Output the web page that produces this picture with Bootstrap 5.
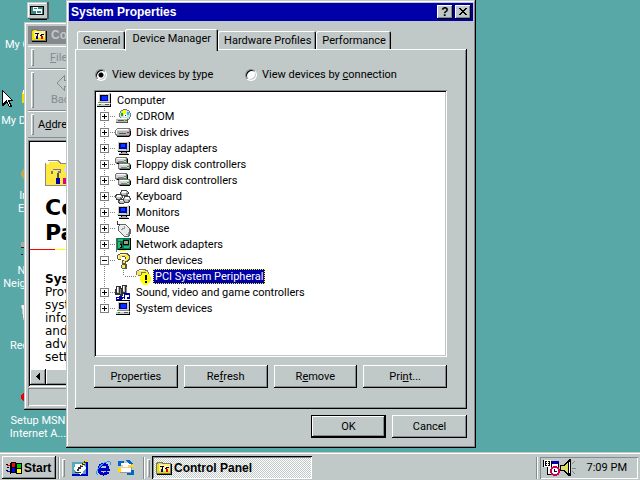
<!DOCTYPE html>
<html lang="en">
<head>
<meta charset="utf-8">
<meta name="viewport" content="width=device-width, initial-scale=1">
<title>System Properties</title>
<link href="https://cdn.jsdelivr.net/npm/bootstrap@5.3.0/dist/css/bootstrap.min.css" rel="stylesheet">
<style>
:root{--face:#c0c8c8;--shade:#868a8e;--teal:#58a8a8;--navy:#0000a8}
body{font:11px/16px Roboto,"Liberation Sans",Arial,sans-serif;color:#000;background:var(--teal)}
button{font:inherit;color:inherit}
svg{display:block;flex:none;shape-rendering:crispEdges}
u{text-underline-offset:1px}
.desktop{background:var(--teal)}
.px12{font-family:"Liberation Sans",Arial,sans-serif;font-size:12px;font-weight:700}
.frame{background:var(--face);padding:3px;box-shadow:inset -1px -1px #000,inset 1px 1px var(--face),inset -2px -2px var(--shade),inset 2px 2px #fff}
.raised{background:var(--face);border:0;border-radius:0;padding:0;box-shadow:inset -1px -1px #000,inset 1px 1px #fff,inset -2px -2px var(--shade)}
.sunken{box-shadow:inset 1px 1px var(--shade),inset -1px -1px #fff}
.field{background:#fff;padding:2px;box-shadow:inset 1px 1px var(--shade),inset -1px -1px #fff,inset 2px 2px #000,inset -2px -2px var(--face)}
.default{box-shadow:inset 0 0 0 1px #000,inset -2px -2px #000,inset 2px 2px #fff,inset -3px -3px var(--shade)}

/* desktop icons */
.shortcut{left:1px;width:74px;color:#fff;line-height:13px;text-decoration:none;text-align:center}
.shortcut svg{margin:0 auto 4px}
.spot-computer{top:2px}
.spot-computer svg{margin-bottom:17px}
.spot-documents{top:90px}
.spot-internet{top:163px}
.spot-network{top:240px}
.spot-recycle{top:305px}
.spot-msn{top:388px}

/* folder window */
.folder-win{left:24px;top:22px;width:56px;padding:4px;overflow:hidden}
.folder-title{background:var(--shade);color:var(--face);height:18px;padding-left:3px;margin-bottom:2px;white-space:nowrap}
.band{padding-left:3px;border-top:1px solid #fff;border-bottom:1px solid var(--shade);color:var(--shade)}
.menu-band{height:23px}
.tool-band{height:42px}
.address-band{height:27px;margin-bottom:2px;color:#000}
.grip{flex:none;width:3px;align-self:stretch;margin:2px 0;box-shadow:inset 1px 1px #fff,inset -1px -1px var(--shade)}
.web-pane{font:12px/13px "DejaVu Sans",Verdana,sans-serif;padding:17px 0 0 15px;height:227px;overflow:hidden}
.web-pane h1{font:700 22px/25px "DejaVu Sans",Verdana,sans-serif;margin:8px 0 4px}
.web-rule{height:1px;margin:0 0 23px -15px;background:linear-gradient(90deg,#f00 25px,#ff0 25px)}
.web-pane p{width:76px}
.scroll-btn{width:16px;height:16px}
.status{height:18px;margin-top:1px}

/* dialog */
.dialog{left:66px;top:0;width:410px}
.dialog-title{background:var(--navy);color:#fff;height:18px;padding:0 2px}
.title-btn{width:16px;height:14px;color:#000}
.dialog-body{padding:8px 6px 7px}
.tab-row{padding-left:2px;height:20px}
.sheet-tab{height:18px;background:var(--face);border:0;padding:2px 5px 0 6px;border-radius:2px 2px 0 0;box-shadow:inset 1px 1px #fff,inset -1px 0 #000,inset -2px 0 var(--shade)}
.sheet-tab.active{height:22px;margin-bottom:-2px;padding:0 7px 2px;position:relative;z-index:1}
.sheet{padding:17px 20px 21px 19px;box-shadow:inset -1px -1px #000,inset 1px 1px #fff,inset -2px -2px var(--shade)}
.view-opt{width:150px;gap:5px;padding-left:1px}
.view-opt label,.node{padding-top:1px}
.radio{flex:none;appearance:none;width:12px;height:12px;margin:0;border-radius:50%;background:#fff;border:1px solid;border-color:var(--shade) #fff #fff var(--shade);box-shadow:inset 1px 1px #000,inset -1px -1px var(--face)}
.radio:checked{background:radial-gradient(circle,#000 2px,#fff 3px)}
.device-box{min-height:267px;margin:7px 0 8px}
.tree,.tree ul{list-style:none;margin:0;padding:0}
.node{height:16px}
.node svg{margin-right:5px}
.branch{background:repeating-linear-gradient(#808080 0 1px,#fff 1px 2px) 8px 0/1px calc(100% - 8px) no-repeat}
.branch>li>.node{padding-left:4px}
.dots{height:1px;width:6px;background:repeating-linear-gradient(90deg,#fff 0 1px,#808080 1px 2px)}
.leaf{background:repeating-linear-gradient(#808080 0 1px,#fff 1px 2px) 27px 0/1px 8px no-repeat}
.leaf .node{padding-left:28px}
.leaf .dots{width:12px}
.leaf svg{margin-right:1px}
.toggle{width:9px;height:9px;padding:0;border:1px solid #808080;background:linear-gradient(#000,#000) 1px 3px/5px 1px no-repeat,#fff}
.plus{background:linear-gradient(#000,#000) 1px 3px/5px 1px no-repeat,linear-gradient(#000,#000) 3px 1px/1px 5px no-repeat,#fff}
.picked{background:var(--navy);color:#fff;outline:1px dotted #ff0;outline-offset:-1px;padding:0 2px;line-height:15px}
.push{height:23px;line-height:22px}
.gap6{gap:6px}
.w75{width:75px}
.closing{margin-top:6px}

/* taskbar */
.taskbar{background:var(--face);border-top:1px solid var(--face);box-shadow:inset 0 1px #fff;padding:3px 2px 1px;height:28px}
.gap2{gap:2px}
.task{width:160px;padding-left:4px;border:0;background:repeating-conic-gradient(#fff 0 25%,var(--face) 0 50%) 0 0/2px 2px;box-shadow:inset 1px 1px #000,inset -1px -1px #fff,inset 2px 2px var(--shade)}
.start{width:54px;padding-left:4px}
.etch{width:2px;height:22px;background:linear-gradient(90deg,var(--shade) 1px,#fff 1px)}
.tgrip{width:3px;height:18px;box-shadow:inset 1px 1px #fff,inset -1px -1px var(--shade)}
.quick-bar{gap:7px;padding:0 7px 0 5px}
.quick{border:0;background:none;padding:0}
.tray{width:98px;height:22px;padding:0 11px 0 3px}
.pointer{left:2px;top:90px;z-index:5}
</style>
<script src="https://cdn.jsdelivr.net/npm/bootstrap@5.3.0/dist/js/bootstrap.bundle.min.js"></script>
</head>
<body class="d-flex flex-column vh-100 overflow-hidden">
<svg width="0" height="0" class="position-absolute" aria-hidden="true">
<symbol id="pc" viewBox="0 0 16 16"><path fill="#888" d="M2 0h13v10H2zM1 10h14v4H1z"/><path fill="#c8cccc" d="M2 0h12v9H2zM1 10h13v3H1z"/><path fill="#fff" d="M2 0h11v1H3v8H2zM1 10h13v1H1z"/><path fill="#000" d="M4 2h8v1H5v5H4zM14 1h1v9h-1zM14 11h1v3H1v-1h13z"/><path fill="#0000c8" d="M5 3h7v5H5z"/><path fill="#0030ff" d="M6 3h5v4H6z"/><path fill="#0a0" d="M3 11h2v1H3z"/><path fill="#555" d="M9 11h4v1H9z"/></symbol>
<symbol id="mon" viewBox="0 0 16 16"><path fill="#c8cccc" d="M2 0h12v10H2z"/><path fill="#fff" d="M2 0h11v1H3v8H2z"/><path fill="#000" d="M4 2h8v1H5v5H4zM14 1h1v10H3v-1h11zM6 11h6v1H6zM4 13h10v1H4z"/><path fill="#0000c8" d="M5 3h7v5H5z"/><path fill="#0040ff" d="M6 3h4v3H6z"/><path fill="#aaa" d="M7 11h4v1H7zM4 12h9v1H4z"/><path fill="#0c0" d="M11 8h1v1h-1z"/></symbol>
<symbol id="disk" viewBox="0 0 16 16"><path fill="#777" d="M2 3h12l2 2v5l-2 2H2l-2-2V5z"/><path fill="#d0d4d4" d="M2 4h12v2H2z"/><path fill="#fff" d="M2 4h11v1H2zM1 5h1v4H1z"/><path fill="#b0b4b4" d="M2 6h12v4H2z"/><path fill="#555" d="M4 8h7v1H4z"/><path fill="#f00" d="M12 7h2v1h-2z"/><path fill="#000" d="M2 11h12v1H2zM15 6h1v4h-1zM14 10h1v1h-1z"/></symbol>
<symbol id="drives" viewBox="0 0 16 16"><g id="drv"><path fill="#777" d="M1 0h10l2 2v3l-1 2H1L0 5V1z"/><path fill="#d0d4d4" d="M1 1h10v4H1z"/><path fill="#fff" d="M2 1h8v1H2z"/><path fill="#888" d="M3 4h6v1H3z"/><path fill="#0c0" d="M9 3h2v1H9z"/><path fill="#000" d="M2 6h10v1H2zM12 2h1v4h-1z"/></g><use href="#drv" x="3" y="6"/></symbol>
<symbol id="cd" viewBox="0 0 16 16"><circle cx="10" cy="6" r="6" fill="#777"/><circle cx="10" cy="6" r="5" fill="#d8dcdc"/><path fill="#ff0" d="M8 1h3v4H8z"/><path fill="#0cf" d="M12 3h2v3h-2z"/><path fill="#0b0" d="M6 4h2v3H6z"/><path fill="#fff" d="M9 5h3v3H9z"/><path fill="#333" d="M10 6h1v1h-1z"/><path fill="#bbb" d="M1 9h12v4H1z"/><path fill="#fff" d="M1 9h11v1H1z"/><path fill="#555" d="M3 11h6v1H3zM12 10h1v3h-1zM1 13h12v1H1z"/><path fill="#0b0" d="M10 11h2v1h-2z"/></symbol>
<symbol id="keys" viewBox="0 0 16 16"><g fill="#c0c0c0" stroke="#444"><path d="M6.500 1.500h5l2 2-1 3h-5l-2-2zM1.500 5.500h5l1 3-2 2h-4l-1-3zM9.500 7.500h5l1 3-2 3h-4l-1-3zM4.500 10.500h4l1 3-1 1h-4l-1-2z"/></g><path fill="#fff" d="M7 2h4v2H7zM2 6h4v2H2zM10 8h4v2h-4zM5 11h3v1H5z"/><path fill="#777" d="M11 4h2v2h-2zM5 8h1v2H5zM13 11h1v2h-1z"/></symbol>
<symbol id="mouse" viewBox="0 0 16 16"><path fill="none" stroke="#333" d="M2.500 0v3l2 1h2"/><path fill="#666" d="M5 3h5l6 5v4l-2 4H9l-6-6V5z"/><path fill="#e8ecec" d="M5 4h5l4 4v5l-2 2H9l-5-5V6z"/><path fill="#999" d="M5 8h2V7h2V5h1v3H8v1H6zM11 13h2v-2h1v2l-1 1h-2z"/></symbol>
<symbol id="net" viewBox="0 0 16 16"><path fill="#007850" d="M2 1h14v12H2z"/><path fill="#fff" d="M0 1h1v14H0z"/><path fill="#666" d="M1 1h1v14H1z"/><path fill="#20c070" d="M3 2h5v2H3zM9 9h5v2H9zM3 5h2v6H3zM14 3h1v7h-1z"/><path fill="#000" d="M8 3h6v5H8zM5 7h2v4H5zM15 1h1v12h-1zM3 12h12v1H3z"/><path fill="#999" d="M9 4h4v3H9zM5 8h1v2H5z"/><path fill="#ff0" d="M4 13h7v1H4z"/><path fill="#d00" d="M6 5h1v1H6z"/></symbol>
<symbol id="query" viewBox="0 0 16 16"><path fill="#555" d="M5 0h8v1h1v1h1v5h-1v1h-1v1h-2v2h1v5H7v-1H6v-3h1V7h3V4H7v3H3V6H2V2h1V1h2z"/><path fill="#ffe840" d="M5 1h7v1h1v1h1v3h-1v1h-1v1h-2v2H8V8h1V7h1V6h1V4h-1V3H7v1H6v2H3V2h2zM7 12h3v3H7z"/><path fill="#fff" d="M5 1h5v1H5zM3 3h1v2H3zM6 4h4v2H9v1H6z"/></symbol>
<symbol id="alert" viewBox="0 0 16 16"><path fill="#777" d="M3 0h7v1h2v2h1v4H9V4H6v3H2V6H0V2h1V1h2z"/><path fill="#ffe840" d="M3 1h6v1h2v1h1v3h-2V3H5v3H1V2h2z"/><path fill="#fff" d="M3 1h4v1H3z"/><path fill="#ff0" d="M6 4h6v1h2v3h1v4h-1v2h-2v2H7v-2H5v-2H4V8h1V6h1z"/><path fill="#000" d="M9 6h2v5H9zM9 12h2v2H9z"/></symbol>
<symbol id="sound" viewBox="0 0 16 16"><path fill="#333" d="M1 1h5v2h1V0h5v9H8v2H5v-1H0V4h1z"/><path fill="#bbb" d="M2 2h2v6H2zM8 1h2v6H8z"/><path fill="#fff" d="M2 2h1v5H2zM8 1h1v5H8z"/><path fill="#888" d="M5 4h1v5H5zM11 2h1v6h-1z"/><path fill="#0000a8" d="M9 8h6v6h-3v-2h2v-2h-4v4H7v-2h2zM4 11h3v4H1v-3h2z"/><path fill="#fff" d="M2 13h2v1H2zM8 13h1v1H8z"/><path fill="#000" d="M1 15h14v1H1z"/></symbol>
<symbol id="folder" viewBox="0 0 16 16"><path fill="#777" d="M0 3h1V2h6v1h8v11H0z"/><path fill="#fff080" d="M1 4h13v9H1z"/><path fill="#e8e000" d="M2 3h4v1H2zM1 11h13v2H1zM1 4h2v7H1z"/><path fill="#000" d="M15 4h1v11H1v-1h14zM4 6h4v1H4zM6 7h1v2H6zM10 7h3v1h-3zM9 8h2v1H9z"/><path fill="#fff" d="M4 5h3v1H4zM9 6h3v1H9zM7 8h2v2H7z"/><path fill="#00a" d="M5 9h2v3H5z"/><path fill="#d00" d="M10 9h2v3h-2z"/></symbol>
</svg>

<main class="desktop position-relative flex-grow-1 overflow-hidden">
  <a href="#" class="shortcut spot-computer position-absolute"><svg width="22" height="19"><path fill="#555" d="M1 0h21v17H1z"/><path fill="#c0c8c8" d="M0 0h20v16H0z"/><path fill="#fff" d="M1 1h18v1H2v13H1z"/><path fill="#000" d="M3 4h14v9H3zM3 17h17v1H3z"/><path fill="#388" d="M4 5h12v7H4z"/><path fill="#fff" d="M6 5h5v4H6zM9 7h6v5H9z"/><path fill="#388" d="M7 6h3v1H7zM10 9h4v2h-4z"/></svg>My Computer</a>
  <a href="#" class="shortcut spot-documents position-absolute"><svg width="32" height="20"><path fill="#e8e000" d="M0 2h32v11H0z"/><path fill="#fff" d="M1 0h12v4H1z"/></svg>My Documents</a>
  <a href="#" class="shortcut spot-internet position-absolute"><svg width="34" height="22"><ellipse cx="17" cy="11" rx="17" ry="10" fill="#c0a850"/><ellipse cx="18" cy="11" rx="15" ry="8" fill="#0000a8"/></svg>Internet<br>Explorer</a>
  <a href="#" class="shortcut spot-network position-absolute"><svg width="34" height="20"><path fill="#aaa" d="M0 2h34v5H0z"/><path fill="#222" d="M0 7h34v1H0zM0 14h2v1H0z"/></svg>Network Neighborhood</a>
  <a href="#" class="shortcut spot-recycle position-absolute"><svg width="34" height="30"><path fill="#c0c8c8" d="M0 0h34L31 18H3z"/><path fill="#f2f2f2" d="M1 0h3v17H3z"/></svg>Recycle Bin</a>
  <a href="#" class="shortcut spot-msn position-absolute"><svg width="34" height="22"><ellipse cx="17" cy="9" rx="17" ry="7" fill="#e00"/></svg>Setup MSN<br>Internet A...</a>

  <section class="folder-win frame position-absolute">
    <div class="folder-title px12 d-flex align-items-center gap-1"><svg width="16" height="16"><use href="#folder"/></svg>Control Panel</div>
    <div class="band menu-band d-flex"><span class="grip"></span><span class="ms-3 ps-0 align-self-center text-nowrap"><u>F</u>ile</span></div>
    <div class="band tool-band d-flex"><span class="grip"></span><div class="ms-3 pt-1 text-center"><svg width="26" height="18"><path fill="none" stroke="#868a8e" d="M14 2v4h9v6h-9v4L7 9z"/></svg>Back</div></div>
    <div class="band address-band d-flex"><span class="grip"></span><span class="ms-1 align-self-center">A<u>d</u>dress</span></div>
    <div class="field">
      <div class="web-pane">
        <svg width="32" height="28" viewBox="0 0 32 28"><path fill="#888" d="M0 4h3V1h10l3 3h15v23H0z"/><path fill="#ffe840" d="M1 5h2V2h9l3 3h16v21H1z"/><path fill="#fff" d="M3 2h9v1H4v2H1V4h2z"/><path fill="#777" d="M6 12h2v-2h8v4h-3v-2H8v3H6z"/><path fill="#ddd" d="M8 11h7v1H8zM19 8h5v5h-5z"/><path fill="#0000a8" d="M11 19h4v6h-4z"/><path fill="#555" d="M12 14h2v5h-2z"/><path fill="#e00080" d="M18 19h4v6h-4z"/></svg>
        <h1>Control Panel</h1>
        <div class="web-rule"></div>
        <p class="mb-0"><b>System</b><br>Provides system information and advanced settings.</p>
      </div>
      <div class="d-flex bg-light"><button class="scroll-btn raised" aria-label="Scroll left"><svg width="16" height="16"><path d="M10 4v7H9v-1H8V9H7V8H6V7h1V6h1V5h1V4z"/></svg></button><span class="raised flex-grow-1"></span></div>
    </div>
    <div class="status sunken"></div>
  </section>

  <section class="dialog frame position-absolute" role="dialog" aria-labelledby="dlg-title">
    <div class="dialog-title d-flex align-items-center gap2">
      <span id="dlg-title" class="px12 me-auto">System Properties</span>
      <button class="title-btn raised px12 lh-1" aria-label="Help">?</button>
      <button class="title-btn raised" aria-label="Close"><svg width="16" height="14"><path d="M4 3h2v1h1v1h2V4h1V3h2v1h-1v1h-1v1H9v1h1v1h1v1h1v1h-2V9H9V8H7v1H6v1H4V9h1V8h1V7h1V6H6V5H5V4H4z"/></svg></button>
    </div>
    <div class="dialog-body">
      <div class="tab-row d-flex align-items-end" role="tablist">
        <button class="sheet-tab" role="tab">General</button><button class="sheet-tab active" role="tab" aria-selected="true">Device Manager</button><button class="sheet-tab" role="tab">Hardware Profiles</button><button class="sheet-tab" role="tab">Performance</button>
      </div>
      <div class="sheet" role="tabpanel">
        <div class="d-flex">
          <div class="view-opt d-flex align-items-center"><input class="radio" type="radio" name="view" id="by-type" checked><label for="by-type">View devices by <u>t</u>ype</label></div>
          <div class="view-opt d-flex align-items-center"><input class="radio" type="radio" name="view" id="by-conn"><label class="text-nowrap" for="by-conn">View devices by <u>c</u>onnection</label></div>
        </div>
        <div class="device-box field">
          <ul class="tree">
            <li><div class="node d-flex align-items-center"><svg width="16" height="16"><use href="#pc"/></svg>Computer</div>
              <ul class="branch">
                <li><div class="node d-flex align-items-center"><button class="toggle plus" aria-label="Expand"></button><span class="dots"></span><svg width="16" height="16"><use href="#cd"/></svg>CDROM</div></li>
                <li><div class="node d-flex align-items-center"><button class="toggle plus" aria-label="Expand"></button><span class="dots"></span><svg width="16" height="16"><use href="#disk"/></svg>Disk drives</div></li>
                <li><div class="node d-flex align-items-center"><button class="toggle plus" aria-label="Expand"></button><span class="dots"></span><svg width="16" height="16"><use href="#mon"/></svg>Display adapters</div></li>
                <li><div class="node d-flex align-items-center"><button class="toggle plus" aria-label="Expand"></button><span class="dots"></span><svg width="16" height="16"><use href="#drives"/></svg>Floppy disk controllers</div></li>
                <li><div class="node d-flex align-items-center"><button class="toggle plus" aria-label="Expand"></button><span class="dots"></span><svg width="16" height="16"><use href="#drives"/></svg>Hard disk controllers</div></li>
                <li><div class="node d-flex align-items-center"><button class="toggle plus" aria-label="Expand"></button><span class="dots"></span><svg width="16" height="16"><use href="#keys"/></svg>Keyboard</div></li>
                <li><div class="node d-flex align-items-center"><button class="toggle plus" aria-label="Expand"></button><span class="dots"></span><svg width="16" height="16"><use href="#mon"/></svg>Monitors</div></li>
                <li><div class="node d-flex align-items-center"><button class="toggle plus" aria-label="Expand"></button><span class="dots"></span><svg width="16" height="16"><use href="#mouse"/></svg>Mouse</div></li>
                <li><div class="node d-flex align-items-center"><button class="toggle plus" aria-label="Expand"></button><span class="dots"></span><svg width="16" height="16"><use href="#net"/></svg>Network adapters</div></li>
                <li><div class="node d-flex align-items-center"><button class="toggle" aria-label="Collapse"></button><span class="dots"></span><svg width="16" height="16"><use href="#query"/></svg>Other devices</div>
                  <ul class="leaf"><li><div class="node d-flex align-items-center"><span class="dots"></span><svg width="16" height="16"><use href="#alert"/></svg><span class="picked">PCI System Peripheral</span></div></li></ul></li>
                <li><div class="node d-flex align-items-center"><button class="toggle plus" aria-label="Expand"></button><span class="dots"></span><svg width="16" height="16"><use href="#sound"/></svg>Sound, video and game controllers</div></li>
                <li><div class="node d-flex align-items-center"><button class="toggle plus" aria-label="Expand"></button><span class="dots"></span><svg width="16" height="16"><use href="#pc"/></svg>System devices</div></li>
              </ul></li>
          </ul>
        </div>
        <div class="d-flex gap6">
          <button class="push raised w-100">P<u>r</u>operties</button>
          <button class="push raised w-100">Re<u>f</u>resh</button>
          <button class="push raised w-100">R<u>e</u>move</button>
          <button class="push raised w-100">Pri<u>n</u>t...</button>
        </div>
      </div>
      <div class="closing d-flex justify-content-end gap6"><button class="push raised default w75">OK</button><button class="push raised w75">Cancel</button></div>
    </div>
  </section>

  <svg class="pointer position-absolute" width="12" height="20"><path fill="#000" d="M0 0h1v1h1v1h1v1h1v1h1v1h1v1h1v1h1v1h1v1h1v1h1v1H8v2h1v2h1v2H7v-1H6v-2H5v-1H4v1H3v1H2v1H0z"/><path fill="#fff" d="M1 2h1v1h1v1h1v1h1v1h1v1h1v1h1v1h1v1H6v2h1v2h1v2H7v-2H6v-2H5v-2H4v1H3v1H2v1H1z"/></svg>
</main>

<footer class="taskbar d-flex align-items-center gap2">
  <button class="start raised px12 push d-flex align-items-center gap2"><svg width="16" height="14"><path fill="#000" d="M5 1h5v1h6v11h-6v-1H5v1H4V2h1zM0 3h2v1H0zM1 6h2v1H1zM0 9h2v1H0z"/><path fill="#f00" d="M6 2h3v4H6zM1 4h3v1H1z"/><path fill="#0c0" d="M11 3h4v4h-4z"/><path fill="#00f" d="M6 7h3v4H6zM1 10h3v1H1z"/><path fill="#ff0" d="M11 8h4v4h-4z"/></svg>Start</button>
  <span class="etch"></span><span class="tgrip"></span>
  <div class="quick-bar d-flex">
    <button class="quick" aria-label="Show Desktop"><svg width="16" height="16"><path fill="#00c" d="M0 2h16v14H0z"/><path fill="#5ab" d="M0 2h14v12H0z"/><path fill="#fff" d="M3 4h8l3 4-5 7-7-5z"/><path fill="#333" d="M12 1h2v2h-2zM10 3h3v2h-3zM8 5h3v2H8zM6 7h3v2H6zM5 9h2v2H5zM3 12h6v1H3z"/><path fill="#fc0" d="M13 0h2v2h-2zM11 3h2v1h-2zM9 5h2v1H9z"/></svg></button>
    <button class="quick" aria-label="Internet Explorer"><svg width="16" height="16"><path fill="none" stroke="#00c" stroke-width="3" d="M13 12c-2 3-8 3-9-2-1-7 9-8 9-1H4"/><path fill="none" stroke="#29f" stroke-width="1" d="M3 14C-3 15 8 0 15 2v3"/></svg></button>
    <button class="quick" aria-label="Outlook Express"><svg width="16" height="16"><path fill="#999" d="M2 3h12v10H2z"/><path fill="#fff" d="M2 3h11v9H2z"/><path fill="#fc8" d="M2 5h3v2h5V5h3v3H2z"/><path fill="#06c" d="M0 1h6v2H3v3H0zM9 13h4v-3h3v5H9zM8 0h4l3 4h-4z"/><path fill="#fd0" d="M0 8h3v4H0zM12 5h4v2h-4z"/></svg></button>
  </div>
  <span class="etch"></span><span class="tgrip"></span>
  <button class="task push px12 d-flex align-items-center gap2"><svg width="16" height="16"><use href="#folder"/></svg>Control Panel</button>
  <span class="etch ms-auto"></span>
  <div class="tray sunken d-flex align-items-center"><svg width="34" height="18"><path fill="#fff" d="M1 1h7v7H1zM5 5h10v10H5z"/><path fill="#000" d="M0 1h1v7H0zM2 2h2v5H2zM5 2h2v5H5zM8 2h1v6H8zM4 8h1v8H4zM5 15h11v1H5zM15 5h1v10h-1z"/><path fill="#fff" d="M3 3h1v1H3zM3 5h1v1H3zM5 3h1v1H5zM5 5h1v1H5z"/><path fill="#00a" d="M9 2h7v3H9z"/><circle cx="12" cy="12" r="4" fill="#fff" stroke="#c04" stroke-width="2"/><path fill="#006" d="M11 10h1v2h2v1h-3z"/><path fill="#000" d="M17 6h3l6-6h2v17h-2l-6-5h-3z"/><path fill="#dd6" d="M18 7h3l4-4v11l-4-3h-3z"/><path fill="#fff" d="M26 3h1v11h-1z"/><path fill="none" stroke="#888" d="M29 5l3-3M29 9h4M29 12l3 3"/></svg><span class="ms-auto">7:09 PM</span></div>
</footer>
</body>
</html>
